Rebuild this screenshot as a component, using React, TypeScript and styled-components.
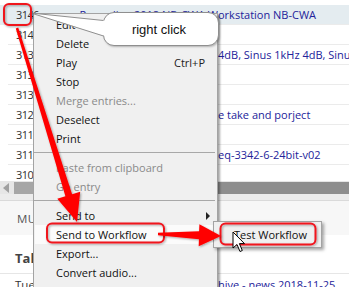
import React from "react";
import styled, { createGlobalStyle } from "styled-components";

const Global = createGlobalStyle`
  html, body { margin: 0; padding: 0; background: #ffffff; }
  body {
    width: 349px;
    height: 287px;
    overflow: hidden;
    font-family: "Open Sans", "Liberation Sans", sans-serif;
  }
`;

const Page = styled.div`
  position: relative;
  width: 349px;
  height: 287px;
  overflow: hidden;
  background: #ffffff;
  display: flex;
  flex-direction: column;
`;

const List = styled.div`
  box-sizing: border-box;
  height: 181px;
  padding-top: 5px;
  overflow: hidden;
  display: flex;
  flex-direction: column;
  flex: none;
`;

const Row = styled.div<{ $selected?: boolean }>`
  flex: none;
  height: 20px;
  background: ${(p) => (p.$selected ? "#e4ecf0" : "transparent")};
`;

const RowLine = styled.div`
  box-sizing: border-box;
  margin-left: 8px;
  height: 100%;
  border-bottom: 1px solid #ebebeb;
  display: flex;
  align-items: center;
  white-space: nowrap;
`;

const NumCell = styled.span`
  flex: none;
  width: 26px;
  padding-left: 8px;
  color: #303030;
  font-size: 11px;
  letter-spacing: -0.6px;
  overflow: hidden;
`;

const MidCell = styled.span`
  flex: none;
  width: 176px;
  overflow: hidden;
  color: #23239a;
  font-size: 11px;
  text-align: right;
`;

const TitleCell = styled.span`
  flex: 1;
  overflow: hidden;
  color: #23239a;
  font-size: 11px;
`;

const ScrollBar = styled.div`
  flex: none;
  height: 13px;
  background: #e6e6e6;
  display: flex;
  align-items: center;
`;

const ScrollArrow = styled.span`
  flex: none;
  width: 0;
  height: 0;
  margin: 0 5px 0 3px;
  border-top: 5px solid transparent;
  border-bottom: 5px solid transparent;
  border-right: 6px solid #a0a0a0;
`;

const ScrollThumb = styled.div`
  flex: 1;
  height: 12px;
  background: linear-gradient(to right, #a6a6a6 0px, #a6a6a6 30px, #8e8e8e 200px);
`;

const Splitter = styled.div`
  flex: none;
  height: 6px;
  background: #ececec;
  border-bottom: 1px solid #dadada;
`;

const TabStrip = styled.div`
  flex: none;
  height: 34px;
  background: #f7f7f7;
  display: flex;
  align-items: center;
  padding-left: 17px;
  font-size: 11.5px;
  color: #555555;
  letter-spacing: 0.3px;
`;

const Content = styled.div`
  flex: 1;
  background: #ffffff;
  display: flex;
  flex-direction: column;
`;

const HeaderRow = styled.div`
  height: 39px;
  display: flex;
  align-items: flex-end;
  padding: 0 0 6px 15px;
  box-sizing: border-box;
  font-size: 13px;
  font-weight: 700;
  color: #444444;
  border-bottom: 1px solid #e6e6e6;
`;

const DataRow = styled.div`
  display: flex;
  align-items: flex-start;
  padding: 3px 0 0 15px;
  font-size: 11.5px;
  color: #333333;
  white-space: nowrap;
`;

const DataLead = styled.span`
  width: 203px;
  flex: none;
`;

const DataTitle = styled.span`
  color: #23239a;
  font-size: 11px;
`;

/* ---------- context menu ---------- */

const Menu = styled.div`
  position: absolute;
  left: 33px;
  top: 13px;
  width: 185px;
  height: 290px;
  box-sizing: border-box;
  background: #f0f0f0;
  border: 1px solid #a3a3a3;
  box-shadow: 2px 2px 2px rgba(0, 0, 0, 0.35);
  padding-top: 1px;
  font-size: 11px;
  color: #111111;
`;

const Item = styled.div<{ $disabled?: boolean; $hover?: boolean }>`
  height: 19px;
  display: flex;
  align-items: center;
  padding: 0 11px 0 21px;
  margin: 0 1px;
  color: ${(p) => (p.$disabled ? "#8a8a8a" : "#111111")};
  background: ${(p) => (p.$hover ? "#fbfbfb" : "transparent")};
  white-space: nowrap;
`;

const Label = styled.span`
  flex: 1;
`;

const Shortcut = styled.span`
  color: #222222;
`;

const SubArrow = styled.span`
  width: 0;
  height: 0;
  margin-right: -5px;
  border-top: 4px solid transparent;
  border-bottom: 4px solid transparent;
  border-left: 4px solid #222222;
`;

const Separator = styled.div`
  height: 1px;
  margin: 4px 2px 5px 0;
  background: #a8a8a8;
`;

const SubMenu = styled.div`
  position: absolute;
  left: 213px;
  top: 221px;
  width: 109px;
  height: 27px;
  box-sizing: border-box;
  background: #f0f0f0;
  border: 1px solid #a3a3a3;
  box-shadow: 2px 2px 3px rgba(0, 0, 0, 0.35);
  display: flex;
  align-items: center;
  padding: 0 0 0 20px;
  font-size: 11px;
  color: #111111;
`;

/* ---------- callout ---------- */

const Bubble = styled.div`
  position: absolute;
  left: 103px;
  top: 12px;
  width: 116px;
  height: 34px;
  box-sizing: border-box;
  background: #ffffff;
  border: 1px solid #8f8f8f;
  border-radius: 11px;
  box-shadow: 1px 1px 2px rgba(0, 0, 0, 0.25);
  display: flex;
  align-items: center;
  justify-content: center;
  padding-right: 4px;
  font-family: "Liberation Sans", Arial, sans-serif;
  font-size: 13px;
  color: #111111;
`;

const Overlay = styled.svg`
  position: absolute;
  left: 0;
  top: 0;
  width: 349px;
  height: 287px;
  pointer-events: none;
`;

const TailLayer = styled.svg`
  position: absolute;
  left: 0;
  top: 0;
  width: 349px;
  height: 287px;
  pointer-events: none;
`;

type ListRow = { num: string; mid?: string; title?: string; selected?: boolean };

const rows: ListRow[] = [
  { num: "3146", mid: "Recording 2018 NB-CWA W", title: "orkstation NB-CWA", selected: true },
  { num: "3145" },
  { num: "3139", mid: "Pink Noise -", title: "4dB, Sinus 1kHz 4dB, Sinus 10kHz" },
  { num: "3138" },
  { num: "3134" },
  { num: "3127", mid: "Interview th", title: "e take and porject" },
  { num: "3118" },
  { num: "3112", mid: "Test eq", title: "eq-3342-6-24bit-v02" },
  { num: "3105" },
];

function arrowPolygon(
  sx: number,
  sy: number,
  tx: number,
  ty: number,
  headLen: number,
  headHalf: number,
  w0: number,
  w1: number
) {
  const dx = tx - sx;
  const dy = ty - sy;
  const L = Math.hypot(dx, dy);
  const ux = dx / L;
  const uy = dy / L;
  const nx = -uy;
  const ny = ux;
  const bx = tx - ux * headLen;
  const by = ty - uy * headLen;
  const pts = [
    [sx + nx * w0, sy + ny * w0],
    [bx + nx * w1, by + ny * w1],
    [bx + nx * headHalf, by + ny * headHalf],
    [tx, ty],
    [bx - nx * headHalf, by - ny * headHalf],
    [bx - nx * w1, by - ny * w1],
    [sx - nx * w0, sy - ny * w0],
  ];
  return pts.map((p) => `${p[0].toFixed(1)},${p[1].toFixed(1)}`).join(" ");
}

export default function App() {
  return (
    <>
      <Global />
      <Page>
        <List>
          {rows.map((r, i) => (
            <Row key={i} $selected={r.selected}>
              <RowLine>
                <NumCell>{r.num}</NumCell>
                <MidCell>{r.mid ?? ""}</MidCell>
                <TitleCell>{r.title ?? ""}</TitleCell>
              </RowLine>
            </Row>
          ))}
        </List>
        <ScrollBar>
          <ScrollArrow />
          <ScrollThumb />
        </ScrollBar>
        <Splitter />
        <TabStrip>MULTITRACK</TabStrip>
        <Content>
          <HeaderRow>Take</HeaderRow>
          <DataRow>
            <DataLead>Tuesday</DataLead>
            <DataTitle>hive - news 2018-11-25</DataTitle>
          </DataRow>
        </Content>

        <Menu>
          <Item>
            <Label>Edit</Label>
          </Item>
          <Item>
            <Label>Delete</Label>
          </Item>
          <Item>
            <Label>Play</Label>
            <Shortcut>Ctrl+P</Shortcut>
          </Item>
          <Item>
            <Label>Stop</Label>
          </Item>
          <Item $disabled>
            <Label>Merge entries...</Label>
          </Item>
          <Item>
            <Label>Deselect</Label>
          </Item>
          <Item>
            <Label>Print</Label>
          </Item>
          <Separator />
          <Item $disabled>
            <Label>Paste from clipboard</Label>
          </Item>
          <Item $disabled>
            <Label>Go entry</Label>
          </Item>
          <Separator />
          <Item>
            <Label>Send to</Label>
            <SubArrow />
          </Item>
          <Item $hover>
            <Label>Send to Workflow</Label>
          </Item>
          <Item>
            <Label>Export...</Label>
          </Item>
          <Item>
            <Label>Convert audio...</Label>
          </Item>
        </Menu>

        <SubMenu>Test Workflow</SubMenu>

        <Bubble>right click</Bubble>
        <TailLayer viewBox="0 0 349 287">
          <polygon points="31,13 105,20.5 105,36" fill="#ffffff" />
          <line x1="31" y1="13" x2="103.5" y2="20.5" stroke="#8f8f8f" strokeWidth="1" />
          <line x1="31" y1="13" x2="103.5" y2="36" stroke="#8f8f8f" strokeWidth="1" />
        </TailLayer>

        <Overlay viewBox="0 0 349 287">
          <defs>
            <filter id="sh" x="-20%" y="-20%" width="140%" height="140%">
              <feDropShadow dx="1" dy="1" stdDeviation="0.8" floodColor="#000" floodOpacity="0.35" />
            </filter>
          </defs>
          <g filter="url(#sh)" fill="none" stroke="#f0141e" strokeWidth="2">
            <rect x="4" y="4" width="27" height="21" rx="5" />
            <rect x="47" y="223.5" width="117" height="19" rx="5" />
            <rect x="220.5" y="223.5" width="95" height="21" rx="5" />
          </g>
          <g filter="url(#sh)" fill="#ff0000">
            <polygon points={arrowPolygon(17, 28, 77, 222, 28, 12, 1.3, 3.5)} />
            <polygon points={arrowPolygon(158, 234, 221, 236, 22, 11, 1.3, 4)} />
          </g>
          <path
            d="M233 232 L233 248 L237 244.5 L240 251.5 L242.3 250.5 L239.4 243.6 L244.5 243.6 Z"
            fill="#ffffff"
            stroke="#000000"
            strokeWidth="1"
            strokeLinejoin="round"
          />
        </Overlay>
      </Page>
    </>
  );
}
